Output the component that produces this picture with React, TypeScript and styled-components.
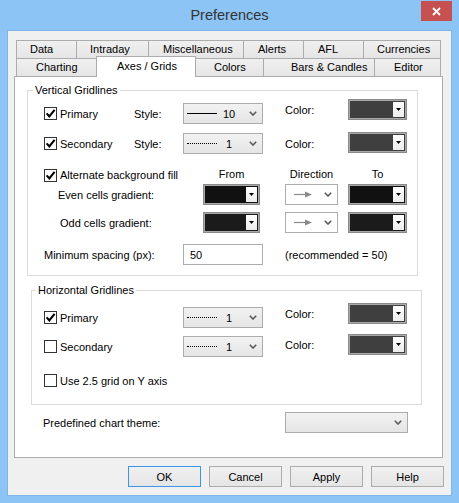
import React from 'react';
import styled, { createGlobalStyle, css } from 'styled-components';

const GlobalStyle = createGlobalStyle`
  * { box-sizing: border-box; }
  html, body { margin: 0; padding: 0; background: #8cc4f6; }
  body {
    font-family: "Liberation Sans", Arial, sans-serif;
    font-size: 11px;
    color: #000;
  }
`;

const Window = styled.div`
  width: 459px;
  height: 503px;
  background: #8cc4f6;
  display: flex;
  flex-direction: column;
  position: relative;
`;

const TitleBar = styled.div`
  height: 31px;
  flex: none;
  display: flex;
  align-items: center;
  justify-content: center;
  font-size: 14.5px;
  color: #333;
  padding-bottom: 1px;
`;

const CloseButton = styled.div`
  position: absolute;
  top: 1px;
  right: 7px;
  width: 31px;
  height: 20px;
  background: #c75050;
  display: flex;
  align-items: center;
  justify-content: center;
`;

const Client = styled.div`
  flex: 1;
  margin: 0 8px 8px 8px;
  background: #f0f0f0;
  box-shadow: 0 0 0 1px #7db5ea;
  padding: 9px 7px 0 6px;
  display: flex;
  flex-direction: column;
`;

const TabStrip = styled.div`
  margin-left: 2px;
  width: 424px;
  display: flex;
  flex-direction: column;
`;

const TabRow = styled.div`
  display: flex;
  height: 18px;
`;

const Tab = styled.div<{ $w: number; $pl: number; $active?: boolean }>`
  flex: none;
  width: ${p => p.$w}px;
  height: 18px;
  margin-right: -1px;
  padding-left: ${p => p.$pl}px;
  border: 1px solid #acacac;
  border-bottom: none;
  background: linear-gradient(#f0f0f0, #e5e5e5);
  line-height: 17px;
  white-space: nowrap;
  ${p =>
    p.$active &&
    css`
      background: #fff;
      height: 21px;
      margin-top: -2px;
      margin-bottom: -1px;
      line-height: 19px;
      position: relative;
      z-index: 1;
    `}
`;

const Panel = styled.div`
  width: 429px;
  height: 382px;
  border: 1px solid #acacac;
  background: #fff;
  display: flex;
  flex-direction: column;
`;

const Group = styled.div<{ $ml: number; $mt: number; $h: number; $pl: number }>`
  position: relative;
  width: 391px;
  height: ${p => p.$h}px;
  margin-left: ${p => p.$ml}px;
  margin-top: ${p => p.$mt}px;
  padding-left: ${p => p.$pl}px;
  border: 1px solid #dcdcdc;
  display: flex;
  flex-direction: column;
`;

const Legend = styled.span<{ $left: number }>`
  position: absolute;
  top: -7px;
  left: ${p => p.$left}px;
  padding: 0 2px;
  background: #fff;
  line-height: 13px;
`;

const Row = styled.div<{ $h: number; $mt: number; $pl?: number }>`
  display: flex;
  align-items: center;
  height: ${p => p.$h}px;
  margin-top: ${p => p.$mt}px;
  padding-left: ${p => p.$pl ?? 0}px;
  flex: none;
`;

const Cell = styled.div<{ $w?: number; $pl?: number; $up?: number; $center?: boolean }>`
  flex: none;
  ${p => (p.$w ? `width: ${p.$w}px;` : '')}
  padding-left: ${p => p.$pl ?? 0}px;
  margin-bottom: ${p => (p.$up ?? 0) * 2}px;
  display: flex;
  align-items: center;
  justify-content: ${p => (p.$center ? 'center' : 'flex-start')};
  white-space: nowrap;
`;

const Box = styled.span`
  width: 13px;
  height: 13px;
  flex: none;
  border: 1px solid #333;
  background: #fff;
  display: flex;
  align-items: center;
  justify-content: center;
  margin-right: 3px;
`;

const Select = styled.div<{ $w: number; $white?: boolean }>`
  width: ${p => p.$w}px;
  height: 21px;
  flex: none;
  border: 1px solid #acacac;
  background: ${p => (p.$white ? '#fff' : 'linear-gradient(#f2f2f2, #e5e5e5)')};
  display: flex;
  align-items: center;
  padding: 0 5px 0 3px;
`;

const LineSample = styled.span<{ $dotted?: boolean }>`
  width: 30px;
  height: 0;
  border-top: 1px ${p => (p.$dotted ? 'dotted' : 'solid')} #000;
`;

const LineNumber = styled.span`
  width: 22px;
  text-align: center;
  margin-left: 1px;
`;

const Caret = styled.span`
  margin-left: auto;
  display: flex;
`;

const ColorPick = styled.div<{ $w: number; $fill: string }>`
  width: ${p => p.$w}px;
  height: 21px;
  flex: none;
  border: 1px solid #8a8a8a;
  box-shadow: inset 0 0 0 1px #a9a9a9;
  padding: 2px;
  background: ${p => p.$fill};
  display: flex;
  justify-content: flex-end;
`;

const PickButton = styled.span`
  width: 11px;
  background: linear-gradient(#ffffff, #ececec);
  display: flex;
  align-items: center;
  justify-content: center;
`;

const TextInput = styled.div`
  width: 80px;
  height: 21px;
  flex: none;
  border: 1px solid #acacac;
  background: #fff;
  display: flex;
  align-items: center;
  padding-left: 6px;
`;

const ButtonBar = styled.div`
  display: flex;
  justify-content: flex-end;
  gap: 8px;
  margin-top: 8px;
`;

const Button = styled.div<{ $default?: boolean }>`
  width: 73px;
  height: 21px;
  border: 1px solid ${p => (p.$default ? '#3d95e8' : '#acacac')};
  background: linear-gradient(#f0f0f0, #e5e5e5);
  display: flex;
  align-items: center;
  justify-content: center;
`;

const Chevron = () => (
  <svg width="8" height="5" viewBox="0 0 8 5">
    <path d="M0.8 0.8 L4 4 L7.2 0.8" fill="none" stroke="#5a5a5a" strokeWidth="1.6" />
  </svg>
);

const Tick = () => (
  <svg width="11" height="11" viewBox="0 0 11 11">
    <path d="M1.6 5.4 L4.3 8.3 L9.6 1.8" fill="none" stroke="#000" strokeWidth="2.1" />
  </svg>
);

const DownTriangle = () => (
  <svg width="5" height="3" viewBox="0 0 5 3">
    <path d="M0 0 H5 L2.5 3 Z" fill="#000" />
  </svg>
);

const DirArrow = () => (
  <svg width="22" height="7" viewBox="0 0 22 7">
    <path d="M0 3.5 H14" stroke="#8a8a8a" strokeWidth="1.2" />
    <path d="M11 0.5 L18 3.5 L11 6.5 Z" fill="#8a8a8a" />
  </svg>
);

const Check = ({ on, label }: { on?: boolean; label: string }) => (
  <>
    <Box>{on && <Tick />}</Box>
    {label}
  </>
);

const StyleSelect = ({ value, dotted }: { value: string; dotted?: boolean }) => (
  <Select $w={80}>
    <LineSample $dotted={dotted} />
    <LineNumber>{value}</LineNumber>
    <Caret>
      <Chevron />
    </Caret>
  </Select>
);

const Swatch = ({ w, fill }: { w: number; fill: string }) => (
  <ColorPick $w={w} $fill={fill}>
    <PickButton>
      <DownTriangle />
    </PickButton>
  </ColorPick>
);

const DirectionSelect = () => (
  <Select $w={53} $white>
    <Cell $pl={5}>
      <DirArrow />
    </Cell>
    <Caret>
      <Chevron />
    </Caret>
  </Select>
);

const topTabs = [
  { label: 'Data', w: 61, pl: 13 },
  { label: 'Intraday', w: 73, pl: 13 },
  { label: 'Miscellaneous', w: 96, pl: 14 },
  { label: 'Alerts', w: 61, pl: 14 },
  { label: 'AFL', w: 61, pl: 14 },
  { label: 'Currencies', w: 78, pl: 13 },
];

const frontTabs = [
  { label: 'Charting', w: 81, pl: 19 },
  { label: 'Axes / Grids', w: 100, pl: 20, active: true },
  { label: 'Colors', w: 69, pl: 18 },
  { label: 'Bars & Candles', w: 112, pl: 27 },
  { label: 'Editor', w: 67, pl: 19 },
];

const App = () => {
  return (
    <Window>
      <GlobalStyle />
      <TitleBar>Preferences</TitleBar>
      <CloseButton>
        <svg width="9" height="9" viewBox="0 0 9 9">
          <path d="M1 1 L8 8 M8 1 L1 8" stroke="#fff" strokeWidth="1.8" />
        </svg>
      </CloseButton>
      <Client>
        <TabStrip>
          <TabRow>
            {topTabs.map(t => (
              <Tab key={t.label} $w={t.w} $pl={t.pl}>
                {t.label}
              </Tab>
            ))}
          </TabRow>
          <TabRow>
            {frontTabs.map(t => (
              <Tab key={t.label} $w={t.w} $pl={t.pl} $active={t.active}>
                {t.label}
              </Tab>
            ))}
          </TabRow>
        </TabStrip>
        <Panel>
          <Group $ml={12} $mt={13} $h={186} $pl={16}>
            <Legend $left={5}>Vertical Gridlines</Legend>
            <Row $h={23} $mt={11}>
              <Cell $w={90}>
                <Check on label="Primary" />
              </Cell>
              <Cell $w={49}>Style:</Cell>
              <StyleSelect value="10" />
              <Cell $w={22} />
              <Cell $w={63} $up={4}>Color:</Cell>
              <Cell $up={4}>
                <Swatch w={59} fill="#3f3f3f" />
              </Cell>
            </Row>
            <Row $h={23} $mt={7}>
              <Cell $w={90}>
                <Check on label="Secondary" />
              </Cell>
              <Cell $w={49}>Style:</Cell>
              <StyleSelect value="1" dotted />
              <Cell $w={22} />
              <Cell $w={63}>Color:</Cell>
              <Cell $up={1}>
                <Swatch w={59} fill="#3f3f3f" />
              </Cell>
            </Row>
            <Row $h={16} $mt={12}>
              <Cell $w={159}>
                <Check on label="Alternate background fill" />
              </Cell>
              <Cell $w={57} $center $up={1}>From</Cell>
              <Cell $w={25} />
              <Cell $w={53} $center $up={1}>Direction</Cell>
              <Cell $w={10} />
              <Cell $w={59} $center $up={1}>To</Cell>
            </Row>
            <Row $h={21} $mt={1}>
              <Cell $w={159} $pl={14}>Even cells gradient:</Cell>
              <Swatch w={57} fill="#111" />
              <Cell $w={25} />
              <DirectionSelect />
              <Cell $w={10} />
              <Swatch w={59} fill="#111" />
            </Row>
            <Row $h={21} $mt={7}>
              <Cell $w={159} $pl={16}>Odd cells gradient:</Cell>
              <Swatch w={57} fill="#1b1b1b" />
              <Cell $w={25} />
              <DirectionSelect />
              <Cell $w={10} />
              <Swatch w={59} fill="#1b1b1b" />
            </Row>
            <Row $h={21} $mt={11}>
              <Cell $w={139}>Minimum spacing (px):</Cell>
              <TextInput>50</TextInput>
              <Cell $w={22} />
              <Cell>(recommended = 50)</Cell>
            </Row>
          </Group>

          <Group $ml={16} $mt={14} $h={115} $pl={12}>
            <Legend $left={4}>Horizontal Gridlines</Legend>
            <Row $h={21} $mt={16}>
              <Cell $w={139}>
                <Check on label="Primary" />
              </Cell>
              <StyleSelect value="1" dotted />
              <Cell $w={22} />
              <Cell $w={63} $up={4}>Color:</Cell>
              <Cell $up={4}>
                <Swatch w={59} fill="#3f3f3f" />
              </Cell>
            </Row>
            <Row $h={21} $mt={8}>
              <Cell $w={139}>
                <Check label="Secondary" />
              </Cell>
              <StyleSelect value="1" dotted />
              <Cell $w={22} />
              <Cell $w={63} $up={2}>Color:</Cell>
              <Cell $up={2}>
                <Swatch w={59} fill="#3f3f3f" />
              </Cell>
            </Row>
            <Row $h={21} $mt={13}>
              <Cell>
                <Check label="Use 2.5 grid on Y axis" />
              </Cell>
            </Row>
          </Group>

          <Row $h={21} $mt={7} $pl={28}>
            <Cell $w={242}>Predefined chart theme:</Cell>
            <Select $w={123}>
              <Caret>
                <Chevron />
              </Caret>
            </Select>
          </Row>
        </Panel>
        <ButtonBar>
          <Button $default>OK</Button>
          <Button>Cancel</Button>
          <Button>Apply</Button>
          <Button>Help</Button>
        </ButtonBar>
      </Client>
    </Window>
  );
};

export default App;
